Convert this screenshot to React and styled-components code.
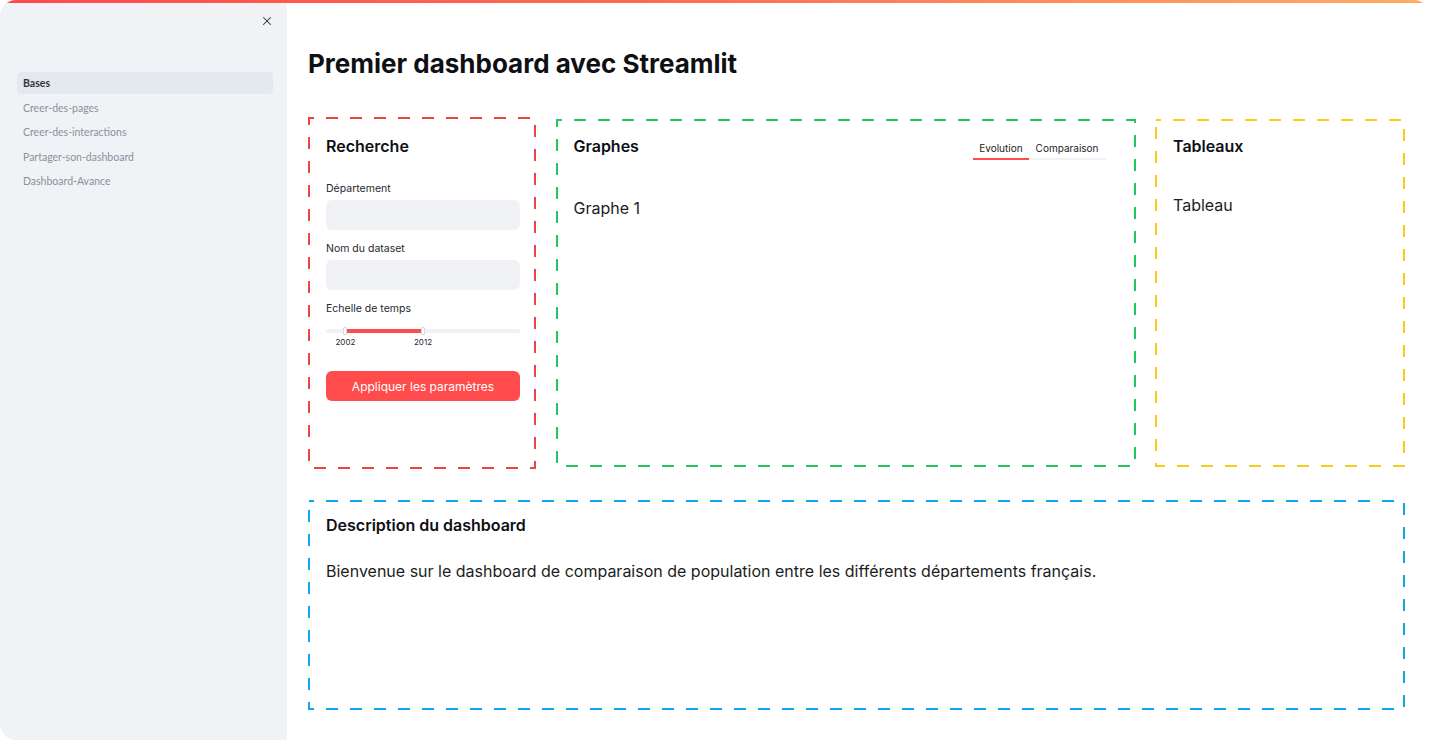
import React from 'react';
import styled, { createGlobalStyle } from 'styled-components';
import { X } from 'lucide-react';

const pages = ['Bases', 'Creer-des-pages', 'Creer-des-interactions', 'Partager-son-dashboard', 'Dashboard-Avance'];

const SLIDER_MIN = 1999.5;
const SLIDER_MAX = 2024.5;
const range = [2002, 2012];
const pct = (v) => ((v - SLIDER_MIN) / (SLIDER_MAX - SLIDER_MIN)) * 100;

const GlobalStyle = createGlobalStyle`
  html, body {
    margin: 0;
    padding: 0;
    background: #ffffff;
  }
  * { box-sizing: border-box; }
`;

const Frame = styled.div`
  width: 1430px;
  height: 740px;
  border-radius: 16px;
  overflow: hidden;
  display: flex;
  flex-direction: column;
  background: #ffffff;
  font-family: Inter, "Noto Sans", sans-serif;
  color: #1c1d22;
`;

const Decoration = styled.div`
  height: 3px;
  flex-shrink: 0;
  background: linear-gradient(90deg, #ff4b4b 0%, #ff6a55 45%, #ffac62 100%);
`;

const Body = styled.div`
  flex: 1;
  display: flex;
  min-height: 0;
`;

const Sidebar = styled.aside`
  width: 287px;
  flex-shrink: 0;
  background: #f0f2f6;
  display: flex;
  flex-direction: column;
  padding: 0 14px 0 17px;
`;

const SidebarHeader = styled.div`
  height: 36px;
  display: flex;
  align-items: center;
  justify-content: flex-end;
`;

const CloseButton = styled.button`
  border: none;
  background: transparent;
  padding: 0;
  width: 14px;
  height: 14px;
  display: flex;
  align-items: center;
  justify-content: center;
  color: #31333f;
  cursor: pointer;
  margin-right: -1px;
`;

const Nav = styled.nav`
  margin-top: 33px;
  display: flex;
  flex-direction: column;
  gap: 2.5px;
`;

const NavItem = styled.a`
  height: 22px;
  display: flex;
  align-items: center;
  padding: 0 6px;
  border-radius: 4px;
  font-family: Lato, "Noto Sans", sans-serif;
  font-size: 10.5px;
  text-decoration: none;
  color: ${(p) => (p.$active ? '#31333f' : '#8d909b')};
  font-weight: ${(p) => (p.$active ? 700 : 400)};
  background: ${(p) => (p.$active ? '#e4e8ef' : 'transparent')};
`;

const Main = styled.main`
  flex: 1;
  padding: 45px 25px 0 21px;
  display: flex;
  flex-direction: column;
`;

const Title = styled.h1`
  margin: 0;
  font-size: 26px;
  line-height: 31px;
  font-weight: 700;
  color: #0e1015;
`;

const Columns = styled.div`
  margin-top: 38px;
  display: grid;
  grid-template-columns: 228px 580px 250px;
  column-gap: 19.5px;
  align-items: center;
`;

const BoxFrame = styled.section`
  position: relative;
  height: ${(p) => p.$height}px;
  padding: ${(p) => p.$top}px 16px 18px 18px;
  display: flex;
  flex-direction: column;
`;

const DashSvg = styled.svg`
  position: absolute;
  inset: 0;
  width: 100%;
  height: 100%;
  overflow: visible;
  pointer-events: none;
`;

const DashRect = styled.rect`
  width: calc(100% - 2px);
  height: calc(100% - 2px);
  fill: none;
  stroke: ${(p) => p.$color};
  stroke-width: 2;
  stroke-dasharray: 12 12;
  stroke-dashoffset: 7;
`;

const Box = ({ color, height, top = 17, children }) => (
  <BoxFrame $height={height} $top={top}>
    <DashSvg>
      <DashRect x="1" y="1" $color={color} />
    </DashSvg>
    {children}
  </BoxFrame>
);

const BoxHeader = styled.div`
  display: flex;
  align-items: flex-start;
  justify-content: space-between;
`;

const Heading = styled.h3`
  margin: 0;
  font-size: 16px;
  line-height: 20px;
  font-weight: 600;
  color: #0e1015;
`;

const Field = styled.div`
  display: flex;
  flex-direction: column;
  gap: 4px;
  margin-top: ${(p) => p.$gap}px;
`;

const Label = styled.label`
  font-size: 10.5px;
  line-height: 14px;
  color: #262730;
`;

const Input = styled.div`
  height: 30px;
  border-radius: 6px;
  background: #f0f2f6;
`;

const SliderArea = styled.div`
  padding-top: 9px;
`;

const Track = styled.div`
  position: relative;
  height: 4px;
  border-radius: 2px;
  background: #f0f2f6;
`;

const Fill = styled.div`
  position: absolute;
  top: 0;
  height: 4px;
  background: #ff4b4b;
`;

const Thumb = styled.div`
  position: absolute;
  top: -2px;
  width: 4px;
  height: 8px;
  margin-left: -2px;
  border-radius: 1px;
  background: #ffffff;
  border: 1px solid #d6d8de;
`;

const TickRow = styled.div`
  position: relative;
  height: 14px;
  margin-top: 2px;
`;

const Tick = styled.span`
  position: absolute;
  top: 0;
  transform: translateX(-50%);
  font-size: 8px;
  line-height: 14px;
  color: #262730;
`;

const ApplyButton = styled.button`
  margin-top: 22px;
  height: 30px;
  border: none;
  border-radius: 6px;
  background: #ff4b4b;
  color: #ffffff;
  font-family: Inter, "Noto Sans", sans-serif;
  font-size: 12px;
  cursor: pointer;
`;

const TabList = styled.div`
  display: flex;
  margin-top: 6px;
  margin-right: 14px;
  border-bottom: 2px solid #f0f2f6;
`;

const Tab = styled.div`
  padding: 0 ${(p) => p.$pad}px 3px;
  margin-bottom: -2px;
  font-size: 10px;
  line-height: 13px;
  color: #1c1d22;
  border-bottom: 2px solid ${(p) => (p.$active ? '#ff4b4b' : 'transparent')};
`;

const Text = styled.p`
  margin: ${(p) => p.$gap}px 0 0;
  font-size: 16px;
  line-height: 20px;
  color: #1c1d22;
`;

const Description = styled.div`
  margin-top: 31px;
`;

export default function App() {
  const [from, to] = range;
  return (
    <>
      <GlobalStyle />
      <Frame>
        <Decoration />
        <Body>
          <Sidebar>
            <SidebarHeader>
              <CloseButton aria-label="Fermer">
                <X size={14} strokeWidth={1.8} />
              </CloseButton>
            </SidebarHeader>
            <Nav>
              {pages.map((p, i) => (
                <NavItem key={p} $active={i === 0}>{p}</NavItem>
              ))}
            </Nav>
          </Sidebar>

          <Main>
            <Title>Premier dashboard avec Streamlit</Title>

            <Columns>
              <Box color="#ef4444" height={352} top={19}>
                <Heading>Recherche</Heading>
                <Field $gap={26}>
                  <Label>Département</Label>
                  <Input />
                </Field>
                <Field $gap={12}>
                  <Label>Nom du dataset</Label>
                  <Input />
                </Field>
                <Field $gap={12}>
                  <Label>Echelle de temps</Label>
                  <SliderArea>
                    <Track>
                      <Fill style={{ left: `${pct(from)}%`, width: `${pct(to) - pct(from)}%` }} />
                      <Thumb style={{ left: `${pct(from)}%` }} />
                      <Thumb style={{ left: `${pct(to)}%` }} />
                    </Track>
                    <TickRow>
                      <Tick style={{ left: `${pct(from)}%` }}>{from}</Tick>
                      <Tick style={{ left: `${pct(to)}%` }}>{to}</Tick>
                    </TickRow>
                  </SliderArea>
                </Field>
                <ApplyButton>Appliquer les paramètres</ApplyButton>
              </Box>

              <Box color="#22c55e" height={348}>
                <BoxHeader>
                  <Heading>Graphes</Heading>
                  <TabList>
                    <Tab $active $pad={6}>Evolution</Tab>
                    <Tab $pad={7}>Comparaison</Tab>
                  </TabList>
                </BoxHeader>
                <Text $gap={38}>Graphe 1</Text>
              </Box>

              <Box color="#facc15" height={348}>
                <Heading>Tableaux</Heading>
                <Text $gap={39}>Tableau</Text>
              </Box>
            </Columns>

            <Description>
              <Box color="#0ea5e9" height={210} top={15}>
                <Heading>Description du dashboard</Heading>
                <Text $gap={26}>
                  Bienvenue sur le dashboard de comparaison de population entre les différents départements français.
                </Text>
              </Box>
            </Description>
          </Main>
        </Body>
      </Frame>
    </>
  );
}
